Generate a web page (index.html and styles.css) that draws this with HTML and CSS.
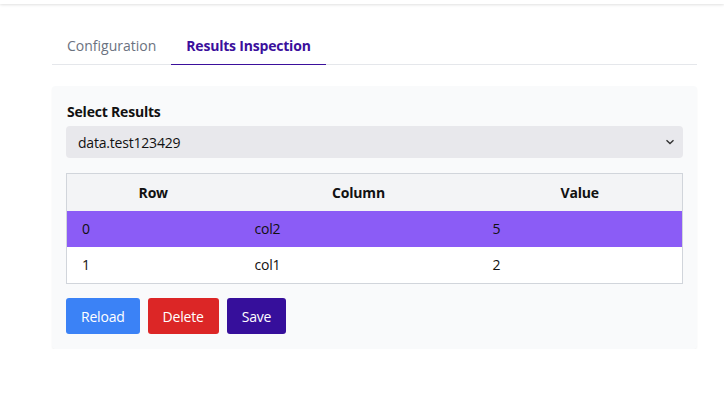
FILE: index.html
```html
<!DOCTYPE html>
<html lang="en">
<head>
	<meta charset="UTF-8">
	<title>Results Inspection</title>
	<link rel="stylesheet" href="styles.css">
</head>
<body>
<div class="top_bar"></div>
<div class="main_wrap">
	<ul class="tab_list">
		<li class="tab_item">Configuration</li>
		<li class="tab_item on">Results Inspection</li>
	</ul>
	<div class="panel">
		<label class="field_label" for="resultSelect">Select Results</label>
		<div class="select_box">
			<select id="resultSelect" class="select_input">
				<option>data.test123429</option>
			</select>
			<svg class="select_arrow" width="10" height="6" viewBox="0 0 10 6"><path d="M1.5 1.2 L5 4.5 L8.5 1.2" fill="none" stroke="#333" stroke-width="1.4"/></svg>
		</div>
		<table class="result_table">
			<colgroup>
				<col class="col_row">
				<col class="col_column">
				<col class="col_value">
			</colgroup>
			<thead>
				<tr><th>Row</th><th>Column</th><th>Value</th></tr>
			</thead>
			<tbody>
				<tr class="selected"><td>0</td><td>col2</td><td>5</td></tr>
				<tr><td>1</td><td>col1</td><td>2</td></tr>
			</tbody>
		</table>
		<div class="btn_group">
			<button type="button" class="btn btn_reload">Reload</button>
			<button type="button" class="btn btn_delete">Delete</button>
			<button type="button" class="btn btn_save">Save</button>
		</div>
	</div>
</div>
</body>
</html>
```

FILE: styles.css
```css
body,div,ul,li,table,th,td,select,button,label{margin:0;padding:0}
ul,li{list-style:none}
body{background:#fff;font-size:14px;line-height:20px;font-family:'Open Sans','Noto Sans',sans-serif;color:#111;letter-spacing:-0.2px}
button{border:0 none;cursor:pointer;font-family:inherit;letter-spacing:inherit}

.top_bar{height:4px;background:#fff;box-shadow:0 1px 3px rgba(0,0,0,0.12)}
.main_wrap{padding:0 27px 0 52px}

.tab_list{display:flex;margin-top:26px;border-bottom:1px solid #e5e7eb}
.tab_list .tab_item{padding:6px 15px 8px;margin-bottom:-1px;color:#6b7280;letter-spacing:0;border-bottom:1px solid transparent}
.tab_list .tab_item.on{color:#3b0f9c;font-weight:bold;letter-spacing:-0.2px;border-bottom-color:#3b0f9c}

.panel{margin-top:21px;padding:15px 14px 15px;background:#f9fafb;border-radius:4px;box-shadow:0 1px 2px rgba(0,0,0,0.05)}
.panel .field_label{display:block;font-weight:bold;margin-top:1px;margin-left:1px}
.panel .select_box{position:relative;margin-top:4px}
.panel .select_input{display:block;width:100%;height:32px;padding:0 12px;border:0;border-radius:4px;background:#e8e8ec;font-family:inherit;font-size:14px;letter-spacing:inherit;color:#111;appearance:none;-webkit-appearance:none}
.panel .select_arrow{position:absolute;right:8px;top:13px}

.result_table{width:100%;margin-top:15px;border-collapse:collapse;border:1px solid #d1d5db;background:#fff}
.result_table .col_row{width:173px}
.result_table .col_column{width:238px}
.result_table th{height:37px;background:#f3f4f6;font-weight:bold;text-align:center;padding:0}
.result_table td{height:36px;padding:0 15px;text-align:left}
.result_table tr.selected td{background:#8b5cf6}

.btn_group{display:flex;gap:8px;margin-top:14px}
.btn_group .btn{height:36px;padding:0 15px;border-radius:3px;color:#fff;font-size:14px}
.btn_group .btn_reload{background:#3b82f6}
.btn_group .btn_delete{background:#dc2626}
.btn_group .btn_save{background:#360f9b}
```
